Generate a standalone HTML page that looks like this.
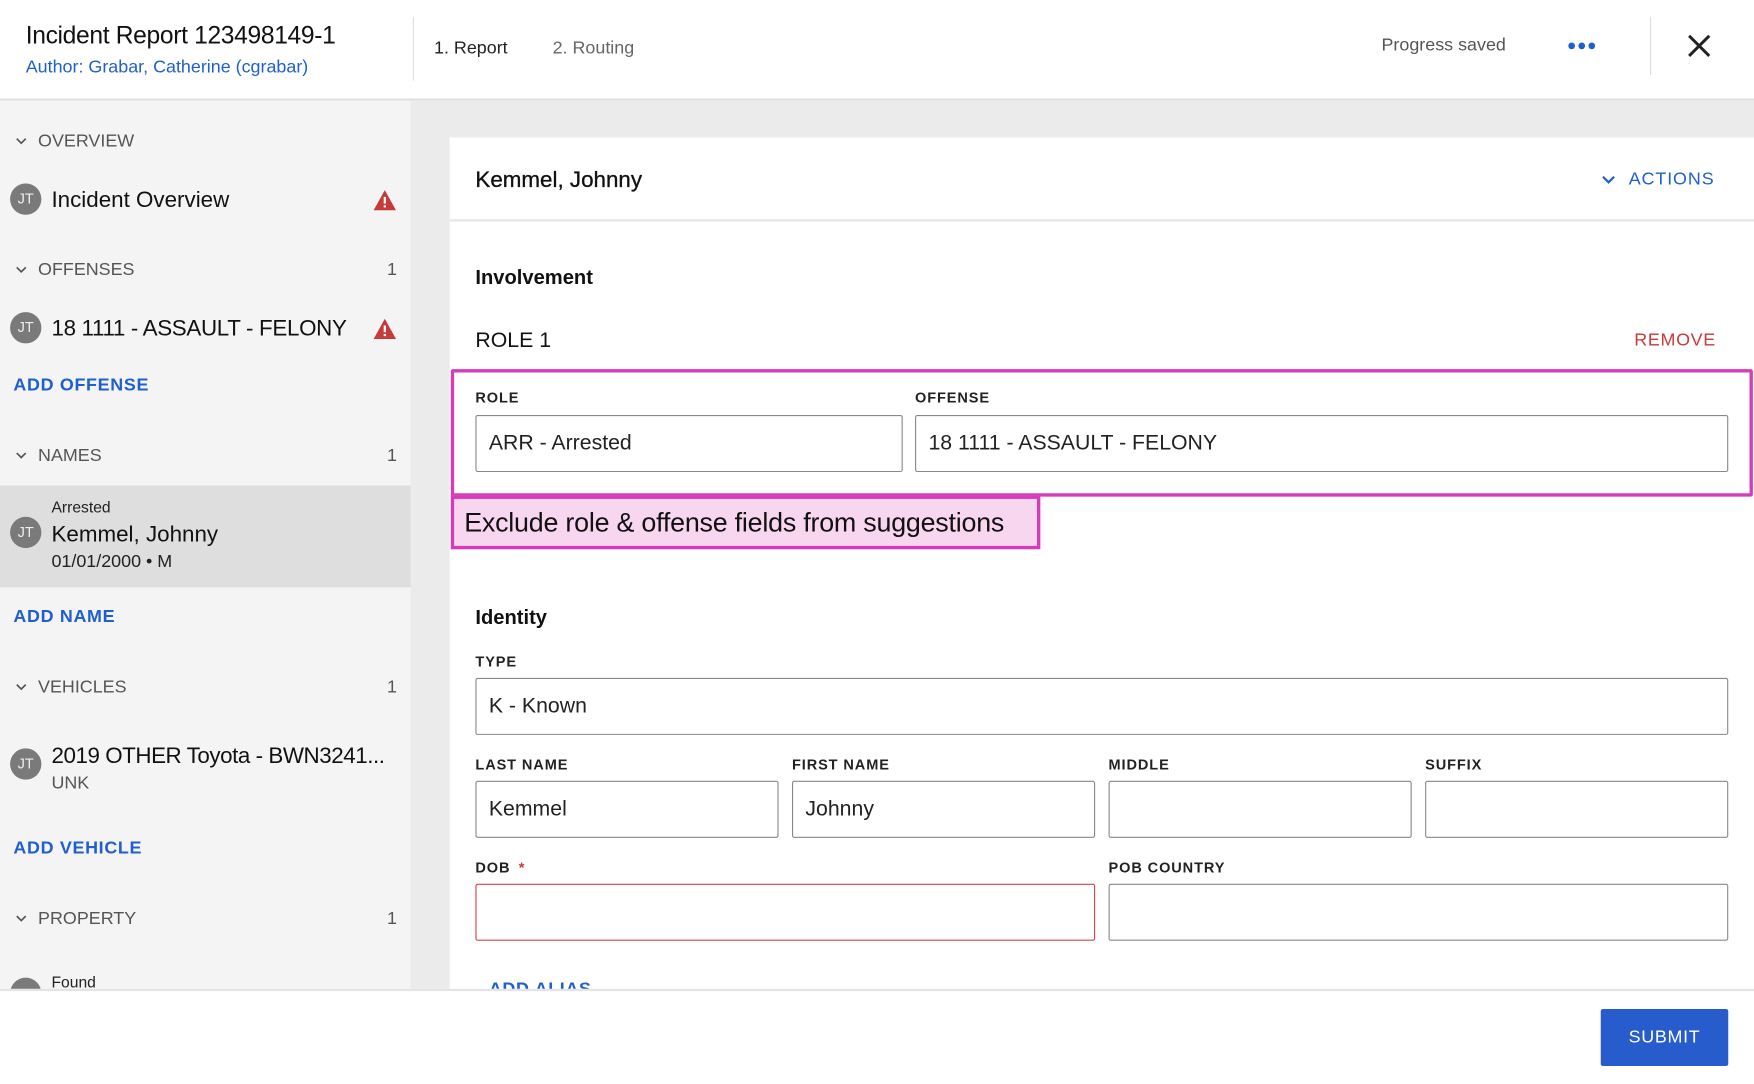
<!DOCTYPE html>
<html><head><meta charset="utf-8"><style>
*{margin:0;padding:0;box-sizing:border-box}
html,body{width:1754px;height:1084px;overflow:hidden;background:#fff;font-family:"Liberation Sans",Arial,sans-serif}
#s{position:absolute;left:0;top:0;width:1568px;height:969px;transform:scale(1.11862);transform-origin:0 0;overflow:hidden}
.a{position:absolute;white-space:nowrap}
.c{line-height:20px}
.sec{font-size:16px;color:#555;line-height:20px}
.cnt{font-size:16px;color:#555;line-height:20px;left:346px}
.chev{left:14px}
.av{position:absolute;left:9px;width:28px;height:28px;border-radius:50%;background:#7a7a7a;color:#eee;font-size:13px;line-height:28px;text-align:center}
.blue{color:#1f5fce}
.add{font-size:16px;font-weight:bold;letter-spacing:.6px;color:#1f5fce;line-height:20px;left:12px}
.lbl{font-size:13px;letter-spacing:.8px;color:#222;line-height:16px;font-weight:bold}
.in{position:absolute;border:1.5px solid #888;border-radius:2px;height:51px;font-size:19px;color:#222;padding-left:11px;line-height:50px;background:#fff}
</style></head><body><div id="s">
<!-- header -->
<div class="a" style="left:23px;top:18px;font-size:22px;color:#111;line-height:28px;letter-spacing:-.3px">Incident Report 123498149-1</div>
<div class="a blue" style="left:23px;top:51px;font-size:16px;line-height:20px">Author: Grabar, Catherine (cgrabar)</div>
<div class="a" style="left:369px;top:15px;width:1px;height:57px;background:#ddd"></div>
<div class="a c" style="left:388px;top:34px;font-size:16px;color:#222">1. Report</div>
<div class="a c" style="left:494px;top:34px;font-size:16px;color:#666">2. Routing</div>
<div class="a c" style="left:1235px;top:31px;font-size:16px;color:#555">Progress saved</div>
<svg class="a" style="left:1400px;top:35px" width="28" height="12"><circle cx="5" cy="6" r="3" fill="#1f5fce"/><circle cx="14" cy="6" r="3" fill="#1f5fce"/><circle cx="23" cy="6" r="3" fill="#1f5fce"/></svg>
<div class="a" style="left:1475px;top:15px;width:1px;height:52px;background:#ddd"></div>
<svg class="a" style="left:1508px;top:30px" width="22" height="22"><path d="M2 2L20 20M20 2L2 20" stroke="#222" stroke-width="2.6"/></svg>
<div class="a" style="left:0;top:88px;width:1568px;height:2px;background:#e0e0e0"></div>
<!-- sidebar -->
<div class="a" style="left:0;top:90px;width:367px;height:795px;background:#f4f4f4"></div>
<div class="a" style="left:0;top:434px;width:367px;height:91px;background:#dedede"></div>
<svg class="a chev" style="top:123px" width="10" height="7"><path d="M1 1L5 5L9 1" stroke="#555" stroke-width="1.5" fill="none"/></svg><div class="a sec" style="left:34px;top:117px">OVERVIEW</div>
<div class="av" style="top:164px">JT</div><div class="a" style="left:46px;top:167px;font-size:20px;color:#111;line-height:24px">Incident Overview</div>
<svg class="a" style="left:333px;top:169px" width="22" height="20"><path d="M11 1L21 19H1Z" fill="#c63a3a"/><rect x="10" y="7" width="2" height="6" fill="#fff"/><rect x="10" y="14.5" width="2" height="2" fill="#fff"/></svg>
<svg class="a chev" style="top:238px" width="10" height="7"><path d="M1 1L5 5L9 1" stroke="#555" stroke-width="1.5" fill="none"/></svg><div class="a sec" style="left:34px;top:232px">OFFENSES</div><div class="a cnt" style="top:232px">1</div>
<div class="av" style="top:279px">JT</div><div class="a" style="left:46px;top:282px;font-size:20px;color:#111;line-height:24px;letter-spacing:-.3px">18 1111 - ASSAULT - FELONY</div>
<svg class="a" style="left:333px;top:284px" width="22" height="20"><path d="M11 1L21 19H1Z" fill="#c63a3a"/><rect x="10" y="7" width="2" height="6" fill="#fff"/><rect x="10" y="14.5" width="2" height="2" fill="#fff"/></svg>
<div class="a add" style="top:335px">ADD OFFENSE</div>
<svg class="a chev" style="top:404px" width="10" height="7"><path d="M1 1L5 5L9 1" stroke="#555" stroke-width="1.5" fill="none"/></svg><div class="a sec" style="left:34px;top:398px">NAMES</div><div class="a cnt" style="top:398px">1</div>
<div class="a" style="left:46px;top:444px;font-size:14px;color:#222;line-height:18px">Arrested</div>
<div class="av" style="top:462px">JT</div><div class="a" style="left:46px;top:466px;font-size:20px;color:#111;line-height:24px">Kemmel, Johnny</div>
<div class="a" style="left:46px;top:493px;font-size:16px;color:#222;line-height:20px">01/01/2000 • M</div>
<div class="a add" style="top:542px">ADD NAME</div>
<svg class="a chev" style="top:611px" width="10" height="7"><path d="M1 1L5 5L9 1" stroke="#555" stroke-width="1.5" fill="none"/></svg><div class="a sec" style="left:34px;top:605px">VEHICLES</div><div class="a cnt" style="top:605px">1</div>
<div class="av" style="top:669px">JT</div><div class="a" style="left:46px;top:664px;font-size:20px;color:#111;line-height:24px;letter-spacing:-.4px">2019 OTHER Toyota - BWN3241...</div>
<div class="a" style="left:46px;top:691px;font-size:16px;color:#555;line-height:20px">UNK</div>
<div class="a add" style="top:749px">ADD VEHICLE</div>
<svg class="a chev" style="top:818px" width="10" height="7"><path d="M1 1L5 5L9 1" stroke="#555" stroke-width="1.5" fill="none"/></svg><div class="a sec" style="left:34px;top:812px">PROPERTY</div><div class="a cnt" style="top:812px">1</div>
<div class="a" style="left:46px;top:869px;font-size:14px;color:#222;line-height:18px">Found</div>
<div class="av" style="top:874px"></div>
<!-- main -->
<div class="a" style="left:367px;top:90px;width:1201px;height:795px;background:#ebebeb"></div>
<div class="a" style="left:402px;top:123px;width:1166px;height:762px;background:#fff"></div>
<div class="a" style="left:425px;top:148px;font-size:20px;color:#111;line-height:26px;-webkit-text-stroke:.3px #111">Kemmel, Johnny</div>
<svg class="a" style="left:1432px;top:157px" width="12" height="8"><path d="M1 1L6 6L11 1" stroke="#1f5fce" stroke-width="2" fill="none"/></svg>
<div class="a blue" style="left:1456px;top:151px;font-size:16px;letter-spacing:.8px;line-height:20px">ACTIONS</div>
<div class="a" style="left:402px;top:196px;width:1166px;height:2px;background:#e6e6e6"></div>
<div class="a" style="left:425px;top:237px;font-size:18px;font-weight:bold;color:#111;line-height:22px">Involvement</div>
<div class="a" style="left:425px;top:294px;font-size:19px;color:#111;line-height:22px">ROLE 1</div>
<div class="a" style="left:1461px;top:295px;font-size:16px;letter-spacing:.6px;color:#c63a3a;line-height:20px">REMOVE</div>
<div class="a" style="left:403px;top:330px;width:1164px;height:114px;border:3px solid #d63bb8;border-radius:2px"></div>
<div class="a lbl" style="left:425px;top:348px">ROLE</div>
<div class="a lbl" style="left:818px;top:348px">OFFENSE</div>
<div class="in" style="left:425px;top:371px;width:382px">ARR - Arrested</div>
<div class="in" style="left:818px;top:371px;width:727px">18 1111 - ASSAULT - FELONY</div>
<div class="a" style="left:403px;top:443px;width:527px;height:48px;background:#f9d6f0;border:3px solid #d63bb8;font-size:24px;color:#111;line-height:44px;padding-left:9px;letter-spacing:-.2px">Exclude role &amp; offense fields from suggestions</div>
<div class="a" style="left:425px;top:541px;font-size:18px;font-weight:bold;color:#111;line-height:22px">Identity</div>
<div class="a lbl" style="left:425px;top:584px">TYPE</div>
<div class="in" style="left:425px;top:606px;width:1120px">K - Known</div>
<div class="a lbl" style="left:425px;top:676px">LAST NAME</div>
<div class="a lbl" style="left:708px;top:676px">FIRST NAME</div>
<div class="a lbl" style="left:991px;top:676px">MIDDLE</div>
<div class="a lbl" style="left:1274px;top:676px">SUFFIX</div>
<div class="in" style="left:425px;top:698px;width:271px">Kemmel</div>
<div class="in" style="left:708px;top:698px;width:271px">Johnny</div>
<div class="in" style="left:991px;top:698px;width:271px"></div>
<div class="in" style="left:1274px;top:698px;width:271px"></div>
<div class="a lbl" style="left:425px;top:768px">DOB <span style="color:#c63a3a;margin-left:3px">*</span></div>
<div class="a lbl" style="left:991px;top:768px">POB COUNTRY</div>
<div class="in" style="left:425px;top:790px;width:554px;border-color:#d04545"></div>
<div class="in" style="left:991px;top:790px;width:554px"></div>
<div class="a add" style="left:437px;top:875px">ADD ALIAS</div>
<!-- footer -->
<div class="a" style="left:0;top:884px;width:1568px;height:85px;background:#fff;border-top:2px solid #e4e4e4"></div>
<div class="a" style="left:1431px;top:902px;width:114px;height:51px;background:#265ccc;border-radius:2px;color:#fff;font-size:16px;letter-spacing:.6px;line-height:51px;text-align:center">SUBMIT</div>
</div></body></html>
